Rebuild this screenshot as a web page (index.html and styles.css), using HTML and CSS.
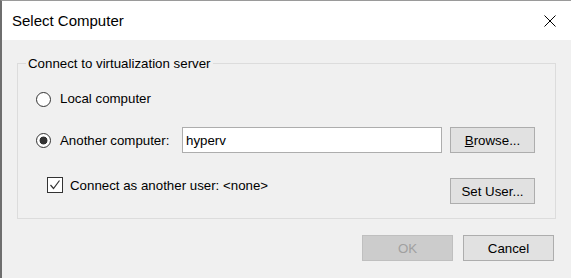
FILE: index.html
```html
<!DOCTYPE html>
<html lang="en">
<head>
  <meta charset="UTF-8">
  <meta name="viewport" content="width=device-width, initial-scale=1.0">
  <title>Select Computer</title>
  <link rel="stylesheet" href="styles.css">
</head>
<body>
  <div class="window">
    <div class="titlebar">
      <span class="title">Select Computer</span>
      <svg class="close" width="12" height="12" viewBox="0 0 12 12">
        <path d="M0.5 0.5 L11.5 11.5 M11.5 0.5 L0.5 11.5" stroke="#000" stroke-width="1" fill="none"/>
      </svg>
    </div>

    <div class="content">
      <fieldset class="group">
        <legend>Connect to virtualization server</legend>

        <label class="row local-row">
          <span class="radio"></span>
          <span>Local computer</span>
        </label>

        <div class="row server-row">
          <label class="radio-label">
            <span class="radio checked"></span>
            <span>Another computer:</span>
          </label>
          <input class="textbox" type="text" value="hyperv">
          <button class="btn">
            <u>B</u>rowse...
          </button>
        </div>

        <div class="row user-row">
          <label class="check-label">
            <span class="check">
              <svg width="14" height="14" viewBox="0 0 14 14">
                <path d="M2.5 7 L5.5 10.5 L11.5 2.5" stroke="#333" stroke-width="1.2" fill="none"/>
              </svg>
            </span>
            <span>Connect as another user: &lt;none&gt;</span>
          </label>
          <button class="btn set-user">Set User...</button>
        </div>
      </fieldset>

      <div class="actions">
        <button class="btn btn-wide" disabled>OK</button>
        <button class="btn btn-wide">Cancel</button>
      </div>
    </div>
  </div>
</body>
</html>
```

FILE: styles.css
```css
body {
  margin: 0;
  font-family: "Liberation Sans", Arial, sans-serif;
  font-size: 13.3px;
  color: #000000;
  background-color: #ffffff;
}
.window {
  width: 571px;
  height: 278px;
  box-sizing: border-box;
  border-top: 1px solid #9a9a9a;
  border-left: 2px solid #6e6e6e;
  display: flex;
  flex-direction: column;
  overflow: hidden;
}
.titlebar {
  height: 39px;
  flex-shrink: 0;
  padding: 0 15px 0 10px;
  display: flex;
  align-items: center;
  justify-content: space-between;
  background-color: #ffffff;
}
.title {
  font-size: 15px;
}
.close {
  display: block;
}
.content {
  flex-grow: 1;
  background-color: #f0f0f0;
  padding: 16px 15px 0 15px;
}
.group {
  margin: 0;
  padding: 0 0 14px 0;
  border: 1px solid #dcdcdc;
  min-width: 0;
}
legend {
  margin-left: 8px;
  padding: 0 2px;
  line-height: 15px;
}
.row {
  display: flex;
  align-items: center;
}
.local-row {
  margin-top: 20px;
  margin-left: 18px;
  height: 16px;
  line-height: 16px;
}
.radio {
  width: 15px;
  height: 15px;
  box-sizing: border-box;
  border: 1px solid #333333;
  border-radius: 50%;
  background-color: #ffffff;
  margin-right: 9px;
  flex-shrink: 0;
}
.radio.checked {
  background: radial-gradient(circle, #333333 0 3.6px, #ffffff 4.3px);
}
.server-row {
  margin-top: 20px;
  height: 26px;
}
.radio-label {
  width: 146px;
  margin-left: 18px;
  display: flex;
  align-items: center;
}
.textbox {
  width: 260px;
  height: 26px;
  box-sizing: border-box;
  margin: 0;
  padding: 0 3px;
  border: 1px solid #adadad;
  background-color: #ffffff;
  font-family: inherit;
  font-size: 13.3px;
  color: #000000;
  outline: none;
}
.btn {
  width: 85px;
  height: 26px;
  margin: 0 0 0 8px;
  padding: 0;
  box-sizing: border-box;
  border: 1px solid #adadad;
  background-color: #e1e1e1;
  font-family: inherit;
  font-size: 13.3px;
  color: #000000;
}
.btn:disabled {
  background-color: #cccccc;
  border-color: #bfbfbf;
  color: #a0a0a0;
}
.user-row {
  margin-top: 24px;
  align-items: flex-start;
}
.check-label {
  height: 16px;
  margin-left: 29px;
  display: flex;
  align-items: center;
}
.check {
  width: 16px;
  height: 16px;
  box-sizing: border-box;
  border: 1px solid #333333;
  background-color: #ffffff;
  margin-right: 7px;
  display: flex;
  align-items: center;
  justify-content: center;
}
.set-user {
  margin: 1px 20px 0 auto;
}
.actions {
  margin-top: 16px;
  padding-right: 2px;
  display: flex;
  justify-content: flex-end;
  gap: 10px;
}
.btn-wide {
  width: 91px;
  margin: 0;
}
```
